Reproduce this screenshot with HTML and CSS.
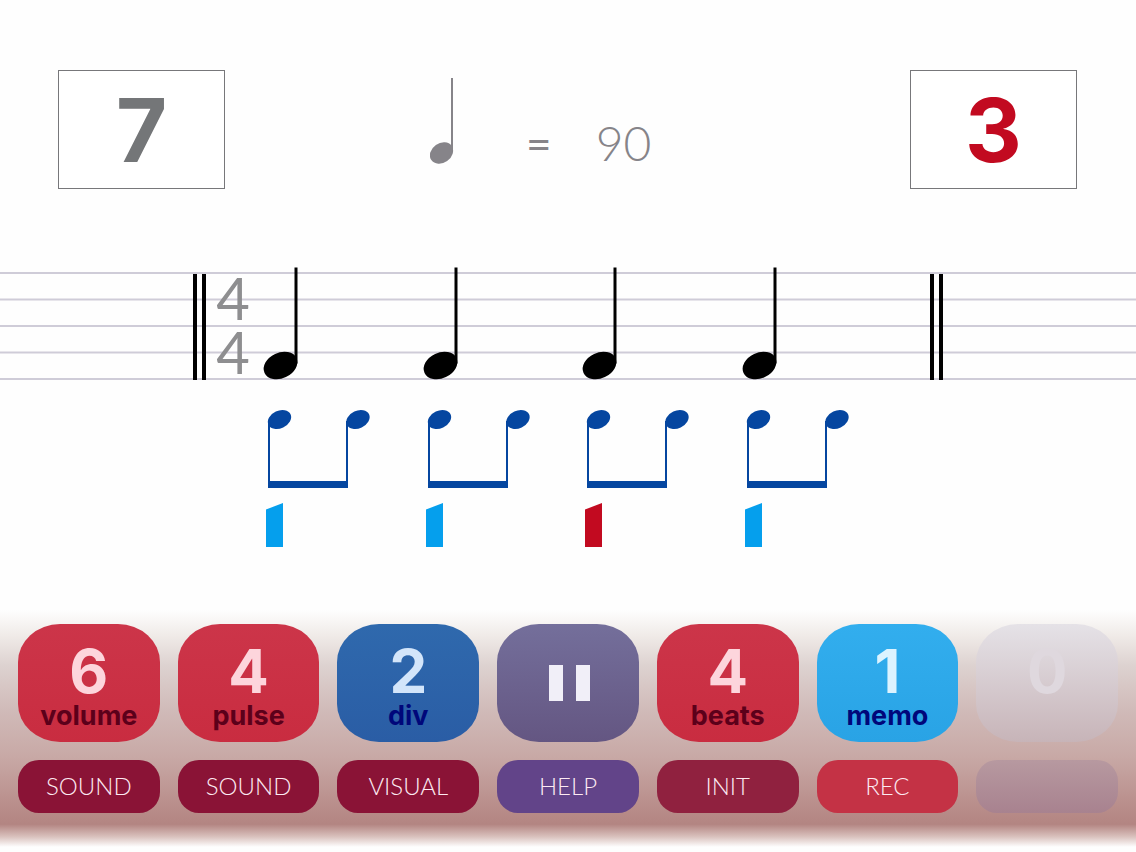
FILE: index.html
```
<!DOCTYPE html>
<html lang="en">
<head>
  <meta charset="UTF-8" />
  <meta name="viewport" content="width=device-width, initial-scale=1.0"/>
  <title>Metronome</title>
  <link rel="stylesheet" href="styles.css">
</head>
<body>

  <header class="topbar">
    <div class="counter">7</div>
    <div class="tempo">
      <svg class="tempo-note" width="24" height="87" viewBox="0 0 24 87" aria-hidden="true">
        <ellipse cx="11.5" cy="75" rx="12.4" ry="9.8" transform="rotate(-35 11.5 75)"/>
        <rect x="21" y="0" width="2" height="74"/>
      </svg>
      <span class="equals">=</span>
      <span class="bpm">90</span>
    </div>
    <div class="counter counter-beat">3</div>
  </header>

  <main>
    <svg class="score" viewBox="0 260 1136 300" role="img" aria-label="Four beats in 4/4">
      <defs>
        <g id="quarter">
          <ellipse cx="280.5" cy="365.5" rx="17.6" ry="12.8" transform="rotate(-25 280.5 365.5)"/>
          <rect x="294.5" y="267.5" width="3" height="96"/>
        </g>
        <g id="eighths">
          <ellipse cx="279.5" cy="419.5" rx="12.2" ry="8.7" transform="rotate(-25 279.5 419.5)"/>
          <ellipse cx="358" cy="419.5" rx="12.2" ry="8.7" transform="rotate(-25 358 419.5)"/>
          <rect x="268" y="421" width="2" height="67"/>
          <rect x="346" y="421" width="2" height="67"/>
          <rect x="268" y="481" width="80" height="7"/>
        </g>
        <polygon id="pulse" points="266,509.5 283,503 283,547 266,547"/>
      </defs>

      <g class="staff">
        <rect x="0" y="272" width="1136" height="2"/>
        <rect x="0" y="298.5" width="1136" height="2"/>
        <rect x="0" y="325" width="1136" height="2"/>
        <rect x="0" y="351.5" width="1136" height="2"/>
        <rect x="0" y="378" width="1136" height="2"/>
      </g>

      <g class="barlines">
        <rect x="193" y="274" width="4" height="106"/>
        <rect x="202" y="274" width="4" height="106"/>
        <rect x="930" y="274" width="4" height="106"/>
        <rect x="939" y="274" width="4" height="106"/>
      </g>

      <text class="signature" x="233" y="320">4</text>
      <text class="signature" x="233" y="374">4</text>

      <g class="beat">
        <use href="#quarter"/>
        <use href="#eighths" class="division"/>
        <use href="#pulse" class="pulse"/>
      </g>
      <g class="beat" transform="translate(160 0)">
        <use href="#quarter"/>
        <use href="#eighths" class="division"/>
        <use href="#pulse" class="pulse"/>
      </g>
      <g class="beat" transform="translate(319 0)">
        <use href="#quarter"/>
        <use href="#eighths" class="division"/>
        <use href="#pulse" class="pulse active"/>
      </g>
      <g class="beat" transform="translate(479 0)">
        <use href="#quarter"/>
        <use href="#eighths" class="division"/>
        <use href="#pulse" class="pulse"/>
      </g>
    </svg>
  </main>

  <section class="controls">
    <button class="pad red"><span class="value">6</span><span class="label">volume</span></button>
    <button class="pad red"><span class="value">4</span><span class="label">pulse</span></button>
    <button class="pad blue"><span class="value">2</span><span class="label">div</span></button>
    <button class="pad violet" aria-label="Pause">
      <svg width="46" height="36" viewBox="0 0 46 36" aria-hidden="true">
        <rect x="4" y="0" width="14" height="36"/>
        <rect x="31" y="0" width="14" height="36"/>
      </svg>
    </button>
    <button class="pad red"><span class="value">4</span><span class="label">beats</span></button>
    <button class="pad sky"><span class="value">1</span><span class="label">memo</span></button>
    <button class="pad ghost" disabled><span class="value">0</span><span class="label"></span></button>

    <button class="key wine">SOUND</button>
    <button class="key wine">SOUND</button>
    <button class="key wine">VISUAL</button>
    <button class="key purple">HELP</button>
    <button class="key plum">INIT</button>
    <button class="key crimson">REC</button>
    <button class="key blank" aria-label="Empty" disabled></button>
  </section>

</body>
</html>
```
FILE: styles.css
```
body {
  margin: 0;
  min-height: 100vh;
  display: flex;
  flex-direction: column;
  font-family: Lato, 'Open Sans', sans-serif;
  background-color: #fefefe;
}

.topbar {
  display: flex;
  justify-content: space-between;
  align-items: flex-start;
  padding: 70px 59px 0 58px;
}

.counter {
  box-sizing: border-box;
  width: 167px;
  height: 119px;
  border: 1px solid #77777a;
  background-color: #fff;
  color: #747678;
  font-family: Inter, sans-serif;
  font-size: 88px;
  font-weight: bold;
  line-height: 118px;
  text-align: center;
}

.counter-beat {
  color: #c20a20;
}

.tempo {
  display: flex;
  align-items: flex-end;
  padding: 8px 54px 0 0;
  color: #868489;
}

.tempo-note {
  fill: #868489;
}

.equals {
  width: 38px;
  margin-left: 66px;
  font-size: 44px;
  line-height: 44px;
  text-align: center;
}

.bpm {
  margin-left: 38px;
  font-size: 48px;
  font-weight: 300;
  line-height: 44px;
}

main {
  margin-top: 71px;
}

.score {
  display: block;
  width: 100%;
}

.staff {
  fill: #cfccd8;
}

.signature {
  fill: #8e8e90;
  font-size: 58px;
  text-anchor: middle;
}

.division {
  fill: #0546a0;
}

.pulse {
  fill: #059fed;
}

.pulse.active {
  fill: #c20a20;
}

/* Control panel */
.controls {
  display: grid;
  grid-template-columns: repeat(7, 1fr);
  gap: 18px;
  margin-top: auto;
  padding: 24px 18px 39px;
  background: linear-gradient(
    #fefefe 4%,
    #f0ebe8 14%,
    #ddd2d0 26%,
    #d0bab8 44%,
    #c8a9a6 62%,
    #ba908d 80%,
    #b38582 89%,
    #dac2be 94%,
    #fefefe 98%
  );
}

.pad,
.key {
  border: none;
  padding: 0;
  font-family: inherit;
  cursor: pointer;
}

.pad {
  display: flex;
  flex-direction: column;
  align-items: center;
  justify-content: center;
  height: 118px;
  padding-top: 16px;
  padding-bottom: 0;
  border-radius: 42px / 38px;
  font-family: Inter, sans-serif;
}

.value {
  font-size: 60px;
  font-weight: bold;
  line-height: 50px;
}

.label {
  font-size: 27px;
  font-weight: bold;
  line-height: 40px;
}

.violet {
  padding-top: 0;
}

.pad svg {
  fill: #f1eff8;
}

.red {
  background: linear-gradient(#cc3549, #c92c40);
  color: #5c001a;
}

.red .value {
  color: #fdd5dc;
}

.blue {
  background: linear-gradient(#2f69ad, #2a5da5);
  color: #00077a;
}

.blue .value {
  color: #d3e5fa;
}

.violet {
  background: linear-gradient(#746f9b, #645682);
}

.sky {
  background: linear-gradient(#32aeee, #29a3e5);
  color: #00077a;
}

.sky .value {
  color: #dcf3ff;
}

.ghost {
  background: linear-gradient(#e5e2e7, #c7b4b8);
}

.ghost .value {
  color: #dfd8de;
}

.ghost .label {
  height: 40px;
}

.key {
  height: 53px;
  padding-bottom: 2px;
  border-radius: 21px;
  color: #fdeaf2;
  font-size: 24px;
  font-weight: 300;
}

.wine {
  background-color: #8a1336;
}

.purple {
  background-color: #624489;
}

.plum {
  background-color: #90213f;
}

.crimson {
  background-color: #c43245;
}

.blank {
  background: linear-gradient(#b799a0, #a8828f);
}

.pad:disabled,
.key:disabled {
  cursor: default;
}
```
